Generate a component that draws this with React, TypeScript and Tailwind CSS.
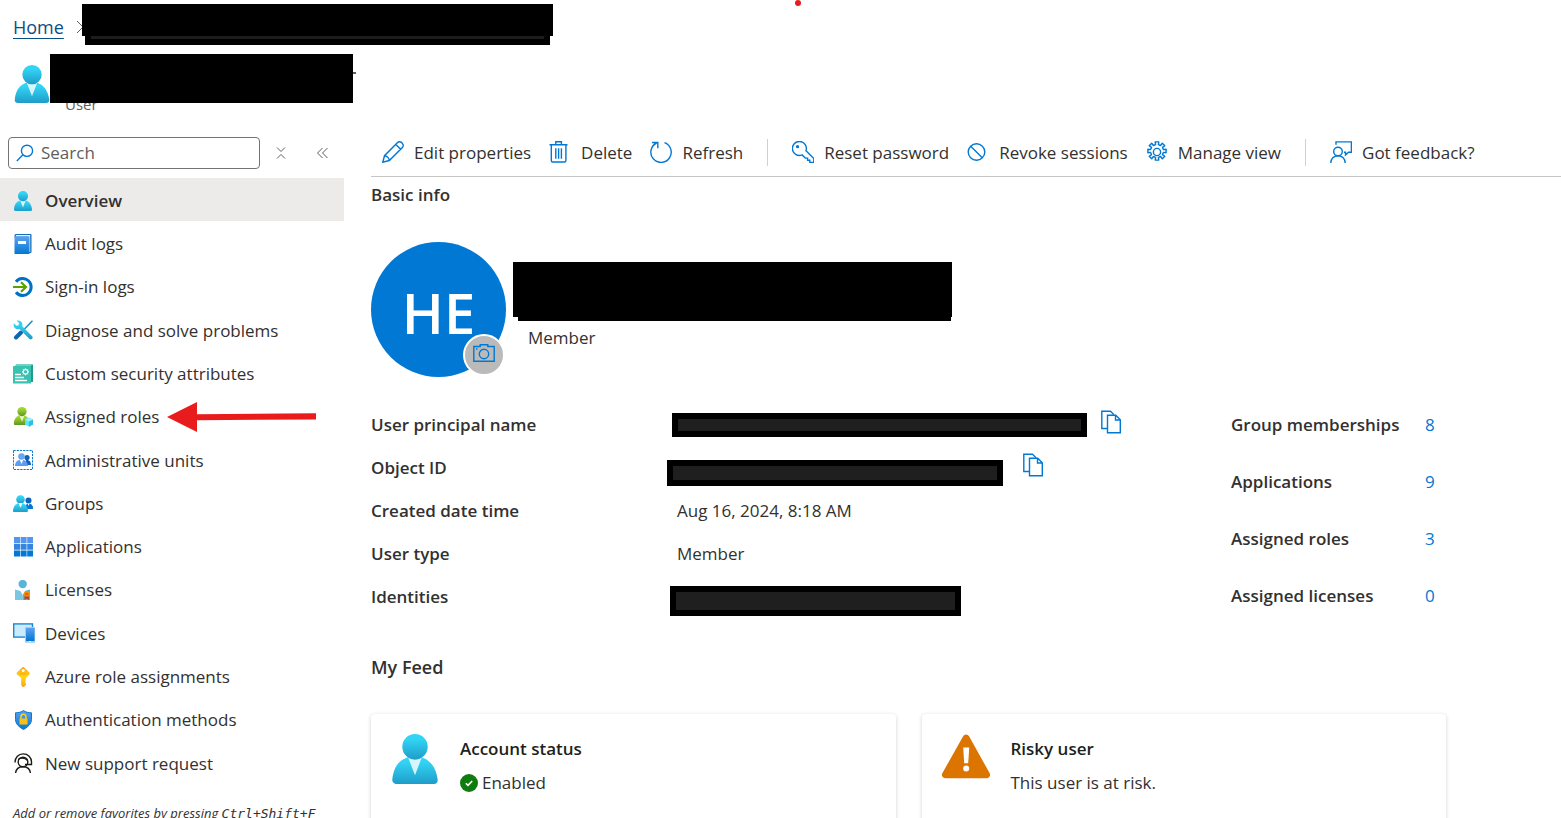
import React from 'react';

const FONT = "font-['Open_Sans','Segoe_UI',sans-serif]";

type IconProps = { className?: string };

// Shared gradients, referenced by id from the icons below
function Gradients() {
  return (
    <svg width="0" height="0" className="absolute" aria-hidden="true">
      <defs>
        <linearGradient id="cyan" x1="0" y1="0" x2="0" y2="1">
          <stop offset="0.2" stopColor="#32d4f5" />
          <stop offset="1" stopColor="#1f9cc8" />
        </linearGradient>
        <linearGradient id="blue" x1="0" y1="0" x2="0" y2="1">
          <stop offset="0" stopColor="#5ea0ef" />
          <stop offset="1" stopColor="#0078d4" />
        </linearGradient>
        <linearGradient id="green" x1="0" y1="0" x2="0" y2="1">
          <stop offset="0.2" stopColor="#a0d72f" />
          <stop offset="1" stopColor="#5e9624" />
        </linearGradient>
        <linearGradient id="gold" x1="0" y1="0" x2="0" y2="1">
          <stop offset="0" stopColor="#fea11b" />
          <stop offset="0.5" stopColor="#ffd70f" />
          <stop offset="1" stopColor="#fea11b" />
        </linearGradient>
      </defs>
    </svg>
  );
}

function PersonShape({ fill }: { fill: string }) {
  return (
    <>
      <path fill={fill} d="M15.72 18a1.45 1.45 0 001.45-1.45.47.47 0 000-.17C16.59 11.81 14 8.09 9 8.09S1.34 11.24.83 16.39A1.46 1.46 0 002.14 18h13.58z" />
      <path fill="#fff" opacity="0.8" d="M9 9.17a4.59 4.59 0 01-2.48-.73L9 14.86l2.44-6.38A4.53 4.53 0 019 9.17z" />
      <circle fill={fill} cx="9" cy="4.58" r="4.58" />
    </>
  );
}

function UserIcon({ className = 'size-5' }: IconProps) {
  return (
    <svg viewBox="0 0 18 18" className={className} aria-hidden="true">
      <PersonShape fill="url(#cyan)" />
    </svg>
  );
}

function NavSvg({ children }: { children: React.ReactNode }) {
  return (
    <svg viewBox="0 0 20 20" className="size-5 shrink-0" fill="none" aria-hidden="true">
      {children}
    </svg>
  );
}

const AuditIcon = () => (
  <NavSvg>
    <path fill="#0f6cbd" d="M3 0h14.500a1 1 0 011 1v17a1 1 0 01-1 1h-1.500L1.500 3V1.500A1.500 1.500 0 013 0z" />
    <path fill="#e8f3fd" d="M3 1h14.200v17H15.500V2.500H2.500z" />
    <path fill="url(#blue)" d="M1.500 2.500h15v17a.8.8 0 01-.8.8H2.300a.8.8 0 01-.8-.8z" />
    <rect x="5" y="7" width="8" height="3" fill="#fff" />
  </NavSvg>
);

const SignInIcon = () => (
  <NavSvg>
    <path stroke="#0072c6" strokeWidth="3" d="M3 4.700A8.500 8.500 0 1 1 3 15.300" />
    <path stroke="#57a300" strokeWidth="2.200" d="M0 10h12.500M8 5.200l5 4.800-5 4.800" />
  </NavSvg>
);

const DiagnoseIcon = () => (
  <NavSvg>
    <path stroke="#1a94c4" strokeWidth="1.600" strokeLinecap="round" d="M19 1.200L10 10.500" />
    <path stroke="#0d66b0" strokeWidth="4" strokeLinecap="round" d="M8 12.500L3 17.500" />
    <path fill="url(#cyan)" d="M.9 3.200L3.500 5.700l2-.4.6-2.200L3.700.8C6 .1 8.500 1 9.300 3.500c.3 1 .2 1.900-.1 2.700l10 10c.7.8.6 1.900-.1 2.600-.7.7-1.800.8-2.600.1L6.400 8.900C4 9.800 1.700 8.800.9 6.600.5 5.400.5 4.200.9 3.200z" />
  </NavSvg>
);

const AttributesIcon = () => (
  <NavSvg>
    <path fill="#1f9c8a" d="M3 .5h17v17.500h-3V3H3z" />
    <rect x="0" y="2" width="18" height="17.500" rx="0.600" fill="#37c2b1" />
    <path fill="#5fd8c8" d="M3 .5h16.500L17.800 2H2z" />
    <path stroke="#fff" strokeWidth="1.400" d="M2 10.500h6M2 13.500h9M2 16.500h12" />
    <circle cx="12.500" cy="7.800" r="2.300" stroke="#fff" strokeWidth="1.200" />
    <path stroke="#fff" strokeWidth="1" d="M12.500 4.300v1.400M12.500 9.900v1.400M9 7.800h1.400M14.600 7.800H16M10 5.300l1 1M14 9.300l1 1M15 5.300l-1 1M11 9.300l-1 1" />
  </NavSvg>
);

const RolesIcon = () => (
  <NavSvg>
    <PersonShape fill="url(#green)" />
    <path fill="#50e6ff" d="M16 10.500l4 2v5l-4 2.300-4-2.300v-5z" />
    <path fill="#9cebff" d="M16 10.500l4 2-4 2.300-4-2.300z" />
    <path fill="#32bedd" d="M16 14.800l4-2.300v5l-4 2.300z" />
  </NavSvg>
);

const AdminUnitsIcon = () => (
  <NavSvg>
    <rect x="0.500" y="0.500" width="19" height="19" stroke="#0078d4" strokeDasharray="2.200 1" />
    <circle cx="14" cy="7.500" r="2.600" fill="#0f5fb8" />
    <path fill="#0f5fb8" d="M13 10c4-.3 5 2.500 5 5H13z" />
    <circle cx="8.500" cy="6.500" r="3.300" fill="#6aa5f2" />
    <path fill="#5e9cf0" d="M2 16c0-3.500 2-6.300 6.500-6.300s6.200 3 6.500 6.300z" />
    <path fill="#fff" d="M6.800 9.900l1.700 4.200 1.700-4.200z" />
  </NavSvg>
);

const GroupsIcon = () => (
  <NavSvg>
    <circle cx="15.500" cy="6.500" r="3" fill="#0c63bd" />
    <path fill="#0078d4" d="M12 15c.2-3.200 1-5.500 3.700-5.500S20 12 20.200 14c0 .6-.3 1-1 1z" />
    <path fill="#fff" d="M14.500 9.500l1 2.500 1-2.500z" />
    <circle cx="7.500" cy="5.500" r="4.300" fill="url(#cyan)" />
    <path fill="url(#cyan)" d="M0 17c.3-4.500 2.500-8 7.500-8s7 3.500 7.500 7.800c0 .7-.4 1.200-1 1.200H1c-.6 0-1-.4-1-1z" />
    <path fill="#fff" d="M5.500 9l2 4.800 2-4.800z" />
  </NavSvg>
);

const AppsIcon = () => (
  <NavSvg>
    <path fill="#5396ee" d="M1 0h6v6H1zM7.600 0h6v6h-6zM14.200 0h6v6h-6z" />
    <path fill="#3385e0" d="M1 6.800h6v6H1zM7.600 6.800h6v6h-6zM14.200 6.800h6v6h-6z" />
    <path fill="#0078d4" d="M1 13.600h6v6H1zM7.600 13.600h6v6h-6zM14.200 13.600h6v6h-6z" />
  </NavSvg>
);

const LicensesIcon = () => (
  <NavSvg>
    <path fill="#7cc6e4" d="M2 9.500l7.500 2V20H2z" />
    <path fill="#59b4d9" d="M17 9.500l-7.500 2V20H17z" />
    <path fill="#fff" d="M6.500 9.500h6.500L9.700 15z" />
    <circle cx="9.700" cy="4" r="4.200" fill="#59b4d9" />
    <path fill="#b8400e" d="M11.500 14h4.400v6l-2.200-1.500-2.200 1.500z" />
    <circle cx="13.700" cy="14" r="2.800" fill="#ff8c00" />
    <circle cx="13.700" cy="14" r="1.300" fill="#dd5900" />
  </NavSvg>
);

const DevicesIcon = () => (
  <svg viewBox="0 0 22 20" className="-mr-0.5 h-5 w-[22px] shrink-0" fill="none" aria-hidden="true">
    <rect x="0.700" y="0.900" width="18.800" height="13.200" fill="#c9ebfb" stroke="#1b86d9" strokeWidth="1.400" />
    <rect x="12" y="4" width="10" height="15.800" rx="0.600" fill="#9fcbf6" />
    <rect x="13" y="5" width="8.500" height="13" fill="url(#blue)" />
    <rect x="16" y="18" width="2" height="1" fill="#fff" />
  </svg>
);

const KeyIcon = () => (
  <NavSvg>
    <path fill="url(#gold)" d="M9.200.4a1.500 1.500 0 012 0l5 5.200a1.400 1.400 0 010 1.900L13 11v.9l-1 1 1.100 1.200-1.100 1.200 1 1.100v1.300l-1.800 2.100a1.200 1.200 0 01-1.700 0l-1.300-1.500V11L4 7.500a1.400 1.400 0 010-1.900z" />
    <circle cx="10.200" cy="3.500" r="1.500" fill="#fff" />
    <path stroke="#fea11b" strokeWidth="1" d="M7 7h6.500" />
  </NavSvg>
);

const ShieldIcon = () => (
  <NavSvg>
    <path fill="url(#blue)" stroke="#0f77cf" d="M10.500.6c2.500 1.700 5 2.100 8 2.200v6.600c0 5-4.500 8-8 10.200-3.500-2.200-8-5.200-8-10.200V2.800c3-.1 5.500-.5 8-2.200z" />
    <path stroke="#ffd70f" strokeWidth="1.500" d="M8 9V6.800a2.500 2.500 0 015 0V9" />
    <rect x="6.500" y="8.500" width="8" height="6" rx="0.500" fill="#fdbf11" />
  </NavSvg>
);

const SupportIcon = () => (
  <NavSvg>
    <circle cx="10" cy="9" r="4.800" stroke="#1b1a19" strokeWidth="1.400" />
    <path stroke="#1b1a19" strokeWidth="1.400" d="M2.500 20.500c.3-4 3-6.800 7.500-6.800s7.200 2.800 7.500 6.800M2 9.500C2 4.500 5.500.9 10.200.9s8.300 3.400 8.300 8.100v2.500h-6.500" />
    <path stroke="#1b1a19" strokeWidth="1.200" d="M5.300 6.500c2-1.800 6-2 9.300 1" />
  </NavSvg>
);

function ToolSvg({ children }: { children: React.ReactNode }) {
  return (
    <svg viewBox="0 0 22 22" className="size-[22px] shrink-0" fill="none" stroke="#0078d4" strokeWidth="1.400" aria-hidden="true">
      {children}
    </svg>
  );
}

const EditIcon = () => (
  <ToolSvg>
    <path d="M.8 21.200l1.700-6.500L15.600 1.600a2.800 2.800 0 014 0l.8.8a2.800 2.800 0 010 4L7.300 19.500zM2.500 14.700c2.400.2 4.600 2.400 4.800 4.800M13.800 3.400l4.800 4.800" />
  </ToolSvg>
);

const DeleteIcon = () => (
  <ToolSvg>
    <path d="M.5 3.800h18M6.800 3.800V.8h5.600v3M2.300 3.800v15.700c0 .9.600 1.500 1.500 1.500h11.600c.9 0 1.500-.6 1.500-1.500V3.800M6.800 7.200v10.500M9.600 7.200v10.500M12.400 7.200v10.500" />
  </ToolSvg>
);

const RefreshIcon = () => (
  <ToolSvg>
    <path d="M14.500 1.600A10.200 10.200 0 1 1 6.600 2M2 1.500h5.800v5.800" />
  </ToolSvg>
);

const PasswordIcon = () => (
  <ToolSvg>
    <path d="M14 9.700l7.800 7.800v4h-4v-2.200h-2.200v-2.200h-2.200l-3.300-3.200A7 7 0 1 1 14 9.700z" />
    <circle cx="5.500" cy="5.700" r="0.900" fill="#0078d4" />
  </ToolSvg>
);

const RevokeIcon = () => (
  <ToolSvg>
    <circle cx="9.500" cy="11" r="8.300" />
    <path d="M3.700 5.200l11.600 11.600" />
  </ToolSvg>
);

const GearIcon = () => (
  <ToolSvg>
    <circle cx="11" cy="11" r="3.600" />
    <path strokeLinejoin="round" d="M9.600 3.600L9.200.9h3.600l-.4 2.700 2.200.9 1.700-2.300 2.500 2.500-2.300 1.700.9 2.200 2.700-.4v3.600l-2.700-.4-.9 2.200 2.300 1.700-2.500 2.500-1.700-2.300-2.200.9.400 2.700H9.200l.4-2.700-2.200-.9-1.700 2.300-2.500-2.500 2.300-1.700-.9-2.200-2.700.4V8.200l2.700.4.9-2.200L3.200 4.700l2.500-2.500 1.700 2.300z" />
  </ToolSvg>
);

const FeedbackIcon = () => (
  <ToolSvg>
    <circle cx="8" cy="10.500" r="4.300" />
    <path d="M.8 22c0-4.200 3-7.200 7.200-7.200s7.200 3 7.200 7.200M6 3.800V.9h15.400v10.300h-2.800L15.500 14v-2.800H14" />
  </ToolSvg>
);

const CopyIcon = () => (
  <svg viewBox="0 0 20 24" className="h-6 w-5 fill-none stroke-[#0078d4]" strokeWidth="1.400" aria-hidden="true">
    <path d="M6.500 18.500H.8V1.200h8.700L13 4.700" />
    <path fill="#fff" d="M6.500 5.200h8.300l4.500 4.500v13H6.500zM14.500 5.200v4.800h4.800" />
  </svg>
);

const navItems = [
  { label: 'Overview', Icon: UserIcon },
  { label: 'Audit logs', Icon: AuditIcon },
  { label: 'Sign-in logs', Icon: SignInIcon },
  { label: 'Diagnose and solve problems', Icon: DiagnoseIcon },
  { label: 'Custom security attributes', Icon: AttributesIcon },
  { label: 'Assigned roles', Icon: RolesIcon, marked: true },
  { label: 'Administrative units', Icon: AdminUnitsIcon },
  { label: 'Groups', Icon: GroupsIcon },
  { label: 'Applications', Icon: AppsIcon },
  { label: 'Licenses', Icon: LicensesIcon },
  { label: 'Devices', Icon: DevicesIcon },
  { label: 'Azure role assignments', Icon: KeyIcon },
  { label: 'Authentication methods', Icon: ShieldIcon },
  { label: 'New support request', Icon: SupportIcon },
];

const toolbarGroups = [
  [
    { label: 'Edit properties', Icon: EditIcon },
    { label: 'Delete', Icon: DeleteIcon },
    { label: 'Refresh', Icon: RefreshIcon },
  ],
  [
    { label: 'Reset password', Icon: PasswordIcon },
    { label: 'Revoke sessions', Icon: RevokeIcon },
    { label: 'Manage view', Icon: GearIcon },
  ],
  [{ label: 'Got feedback?', Icon: FeedbackIcon }],
];

const stats = [
  { label: 'Group memberships', value: 8 },
  { label: 'Applications', value: 9 },
  { label: 'Assigned roles', value: 3 },
  { label: 'Assigned licenses', value: 0 },
];

function Header() {
  return (
    <header>
      <nav aria-label="Breadcrumb" className="flex items-start pt-1 pl-[13px]">
        <a href="#" className="pt-[9px] text-lg text-[#0b4f82] underline underline-offset-4">Home</a>
        <svg viewBox="0 0 8 14" className="mt-4 ml-3 h-3.5 w-2 fill-none stroke-[#605e5c]" aria-hidden="true">
          <path d="M1 1l6 6-6 6" />
        </svg>
        <div className="-ml-0.5">
          <div className="h-8 w-[471px] bg-black" />
          <div className="mx-[3px] h-[9px] border-[6px] border-t-0 border-black bg-[#1c1c1c]" />
        </div>
      </nav>
      <div className="mt-[9px] flex pl-[13px]">
        <UserIcon className="mt-[11px] size-[38px] shrink-0" />
        <div className="-ml-px">
          <div className="flex items-center">
            <div className="relative h-[49px] w-[303px] bg-black" />
            <div className="mb-3 h-0.5 w-[3px] bg-[#605e5c]" />
          </div>
          <p className="-mt-[9px] pl-[15px] text-[15px] leading-5 text-[#605e5c]">User</p>
        </div>
      </div>
    </header>
  );
}

function Sidebar() {
  return (
    <aside className="w-[344px] shrink-0">
      <div className="flex items-center pt-[23px] pl-2">
        <label className="flex h-8 w-[252px] items-center gap-[7px] rounded-sm border border-[#767472] px-[7px]">
          <svg viewBox="0 0 18 18" className="size-[18px] shrink-0 fill-none stroke-[#0078d4]" strokeWidth="1.400" aria-hidden="true">
            <circle cx="11" cy="6.800" r="5.600" />
            <path d="M7 10.800L.8 17" />
          </svg>
          <input type="search" aria-label="Search" placeholder="Search" className="w-full min-w-0 bg-transparent text-[17px] outline-none placeholder:text-[#605e5c]" />
        </label>
        <button type="button" aria-label="Expand all" className="ml-4">
          <svg viewBox="0 0 10 12" className="h-3 w-2.5 fill-none stroke-[#605e5c]" aria-hidden="true">
            <path d="M1 .5l4 4 4-4M1 11.500l4-4 4 4" />
          </svg>
        </button>
        <button type="button" aria-label="Collapse menu" className="ml-[31px]">
          <svg viewBox="0 0 12 12" className="size-3 fill-none stroke-[#605e5c]" aria-hidden="true">
            <path d="M5.500 1l-5 5 5 5M10.500 1l-5 5 5 5" />
          </svg>
        </button>
      </div>
      <nav aria-label="User menu" className="mt-[9px] grid h-[606px] auto-rows-fr">
        {navItems.map(({ label, Icon, marked }, i) => (
          <a
            key={label}
            href="#"
            className={`relative flex items-center gap-3 pt-0.5 pl-[13px] text-[17px] ${i === 0 ? 'bg-[#edebe9] font-semibold' : ''}`}
          >
            <Icon />
            {label}
            {marked && (
              <svg viewBox="0 0 150 30" className="absolute left-[167px] h-[30px] w-[150px]" aria-hidden="true">
                <path fill="#e81c1c" d="M0 15L30 0v12.300l119-1v6.200l-119 .7V30z" />
              </svg>
            )}
          </a>
        ))}
      </nav>
      <p className="mt-5 pl-[13px] text-[13px] whitespace-nowrap italic">
        Add or remove favorites by pressing <kbd className="font-['DejaVu_Sans_Mono',monospace] text-[13px]">Ctrl+Shift+F</kbd>
      </p>
    </aside>
  );
}

function Toolbar() {
  return (
    <div role="toolbar" className="flex h-[63px] items-center gap-6 border-b border-[#c8c6c4] pt-[14px] pl-[11px]">
      {toolbarGroups.map((group, i) => (
        <React.Fragment key={i}>
          {i > 0 && <div className="h-[27px] w-px bg-[#d2d0ce]" />}
          <div className="flex gap-[18px]">
            {group.map(({ label, Icon }) => (
              <button key={label} type="button" className="flex items-center gap-2.5 text-[17px] whitespace-nowrap">
                <Icon />
                <span className="pt-0.5">{label}</span>
              </button>
            ))}
          </div>
        </React.Fragment>
      ))}
    </div>
  );
}

function Profile() {
  return (
    <div className="mt-[34px] flex">
      <div className="relative flex size-[135px] shrink-0 items-center justify-center rounded-full bg-[#0078d4] pt-1 text-[56px] font-semibold text-white">
        HE
        <button type="button" aria-label="Change photo" className="absolute right-px bottom-px flex size-[42px] items-center justify-center rounded-full border-2 border-white bg-[#bababa] pb-1">
          <svg viewBox="0 0 22 18" className="h-[18px] w-[22px] fill-none stroke-[#0078d4]" strokeWidth="1.400" aria-hidden="true">
            <path d="M.8 2.500h6.400V.8h7.600v1.700h6.400v14.700H.8z" />
            <circle cx="11" cy="10" r="4.700" />
            <path d="M3 5h1.500" />
          </svg>
        </button>
      </div>
      <div className="mt-5 ml-[7px]">
        <div className="h-[55px] w-[439px] bg-black" />
        <div className="mr-px ml-[5px] h-1 bg-black" />
        <p className="mt-1 pl-[15px] text-[17px]">Member</p>
      </div>
    </div>
  );
}

function Detail({ label, children }: { label: string; children: React.ReactNode }) {
  return (
    <div className="flex h-[43px] items-center">
      <dt className="w-[306px] shrink-0 font-semibold">{label}</dt>
      <dd className="flex items-center">{children}</dd>
    </div>
  );
}

function CopyButton({ label }: { label: string }) {
  return (
    <button type="button" aria-label={label} className="mb-1.5">
      <CopyIcon />
    </button>
  );
}

function Details() {
  return (
    <div className="mt-[26px] flex text-[17px]">
      <dl className="w-[860px] shrink-0">
        <Detail label="User principal name">
          <div className="mr-3.5 -ml-[5px] h-6 w-[415px] border-[6px] border-black bg-[#1f1f1f]" />
          <CopyButton label="Copy user principal name" />
        </Detail>
        <Detail label="Object ID">
          <div className="mt-2.5 mr-5 -ml-2.5 h-[26px] w-[336px] border-[6px] border-black bg-[#1f1f1f]" />
          <CopyButton label="Copy object ID" />
        </Detail>
        <Detail label="Created date time">Aug 16, 2024, 8:18 AM</Detail>
        <Detail label="User type">Member</Detail>
        <Detail label="Identities">
          <div className="mt-2 -ml-[7px] h-[30px] w-[291px] border-[6px] border-black bg-[#1f1f1f]" />
        </Detail>
      </dl>
      <dl className="flex flex-col gap-3.5">
        {stats.map(({ label, value }) => (
          <div key={label} className="flex h-[43px] items-center">
            <dt className="w-[194px] font-semibold">{label}</dt>
            <dd>
              <a href="#" className="text-[#0078d4]">{value}</a>
            </dd>
          </div>
        ))}
      </dl>
    </div>
  );
}

function FeedCard({ icon, title, children }: { icon: React.ReactNode; title: string; children: React.ReactNode }) {
  return (
    <article className="flex h-40 gap-5 rounded-sm bg-white px-[19px] pt-5 shadow-[0_1px_4px_rgba(0,0,0,0.18)]">
      {icon}
      <div className="text-[17px]">
        <h3 className="leading-[30px] font-semibold text-[#201f1e]">{title}</h3>
        <div className="mt-1 flex items-center leading-[30px]">{children}</div>
      </div>
    </article>
  );
}

export default function App() {
  return (
    <div className={`relative h-screen overflow-hidden bg-white text-[#323130] ${FONT}`}>
      <Gradients />
      <div className="absolute top-0 left-[795px] size-1.5 rounded-full bg-[#e81c1c]" />
      <Header />
      <div className="flex">
        <Sidebar />
        <main className="ml-[27px] min-w-0 flex-1">
          <Toolbar />
          <h2 className="mt-[5px] text-[17px] leading-[26px] font-semibold">Basic info</h2>
          <Profile />
          <Details />
          <h2 className="mt-9 text-[18px] leading-[26px] font-semibold">My Feed</h2>
          <div className="mt-[34px] grid max-w-[1075px] grid-cols-2 gap-[26px]">
            <FeedCard title="Account status" icon={<UserIcon className="size-[50px]" />}>
              <svg viewBox="0 0 18 18" className="mr-1 size-[18px]" aria-hidden="true">
                <circle cx="9" cy="9" r="9" fill="#107c10" />
                <path d="M5.800 9.200l2.200 2.200 4.200-4.400" fill="none" stroke="#fff" strokeWidth="1.600" />
              </svg>
              Enabled
            </FeedCard>
            <FeedCard
              title="Risky user"
              icon={
                <svg viewBox="0 0 50 50" className="size-[50px]" aria-hidden="true">
                  <path fill="#db7500" d="M22 2.500a3.500 3.500 0 016.200 0l20.500 36.800a3.300 3.300 0 01-2.900 4.900H4.200a3.300 3.300 0 01-2.900-4.900z" />
                  <path fill="#fff" d="M22.200 13.500h6l-1 15.800h-4z" />
                  <circle cx="25.200" cy="34.500" r="3" fill="#fff" />
                </svg>
              }
            >
              This user is at risk.
            </FeedCard>
          </div>
        </main>
      </div>
    </div>
  );
}
